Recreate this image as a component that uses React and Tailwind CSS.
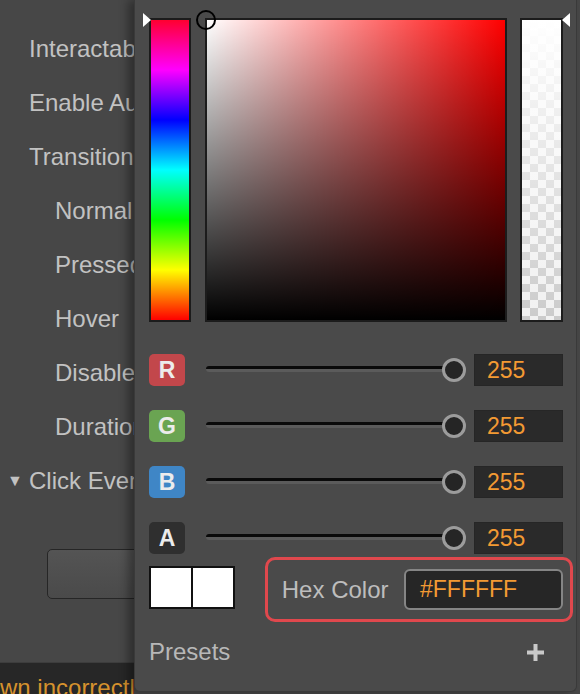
import React from 'react';

const labels = [
  { text: 'Interactable', indent: false },
  { text: 'Enable Auto Gray Effect', indent: false },
  { text: 'Transition', indent: false },
  { text: 'Normal', indent: true },
  { text: 'Pressed', indent: true },
  { text: 'Hover', indent: true },
  { text: 'Disabled', indent: true },
  { text: 'Duration', indent: true },
];

const channels = [
  { key: 'R', badge: 'bg-[#c2474b]', value: 255 },
  { key: 'G', badge: 'bg-[#6aa452]', value: 255 },
  { key: 'B', badge: 'bg-[#3f86c6]', value: 255 },
  { key: 'A', badge: 'bg-[#2f2f2f]', value: 255 },
];

function ChannelRow({ ch }) {
  return (
    <div className="flex items-center h-[32px]">
      <div className={`${ch.badge} w-[36px] h-[32px] rounded-[5px] flex items-center justify-center text-[23px] font-bold text-[#ececec]`}>
        {ch.key}
      </div>
      {/* slider */}
      <div className="relative ml-[21px] w-[260px] h-[32px] flex items-center">
        <div className="w-[248px] h-[6px] -translate-y-[1px] rounded-l-full border-t-[3px] border-[#0a0a0a] bg-[#5b5b5b]" />
        <div className="absolute right-0 top-[4px] w-[24px] h-[24px] rounded-full border-[3px] border-[#9c9c9c] bg-[#252525]" />
      </div>
      <div className="ml-[8px] w-[89px] h-[32px] bg-[#2a2a2a] border border-[#262626] flex items-center pl-[12px] text-[23px] text-[#f39a33]">
        {ch.value}
      </div>
    </div>
  );
}

function ColorPicker() {
  return (
    <div className="absolute left-[134px] top-0 w-[443px] h-[692px] bg-[#4a4a4a] border-l border-r border-b border-[#3a3a3a] rounded-b-[6px] shadow-[-6px_0_10px_rgba(0,0,0,0.35)] pl-[14px] pt-[18px] pr-[13px]">
      {/* pickers */}
      <div className="flex h-[304px]">
        {/* hue */}
        <div className="relative w-[42px] h-full border-2 border-[#1c1c1c]">
          <div className="w-full h-full bg-[linear-gradient(to_bottom,#ff0030,#ff00ff,#0000ff,#00ffff,#00ff00,#ffff00,#ff0000)]" />
          <svg className="absolute -left-[8px] -top-[7px]" width="8" height="14" viewBox="0 0 8 14">
            <polygon points="0,0 8,7 0,14" fill="#ffffff" />
          </svg>
        </div>
        {/* saturation / value */}
        <div className="relative ml-[14px] w-[302px] h-full border-2 border-[#1c1c1c] bg-[#ff0000]">
          <div className="w-full h-full bg-[linear-gradient(to_right,#ffffff,rgba(255,255,255,0))]">
            <div className="w-full h-full bg-[linear-gradient(to_bottom,rgba(0,0,0,0),#000000)]" />
          </div>
          <div className="absolute -left-[11px] -top-[10px] w-[20px] h-[20px] rounded-full border-[2.5px] border-black" />
        </div>
        {/* alpha */}
        <div className="relative ml-[13px] w-[43px] h-full border-2 border-[#1c1c1c]">
          <div className="w-full h-full bg-[repeating-conic-gradient(#cbcbcb_0%_25%,#f1f1f1_0%_50%)] bg-[length:16px_16px]">
            <div className="w-full h-full bg-[linear-gradient(to_bottom,#ffffff,rgba(255,255,255,0))]" />
          </div>
          <svg className="absolute -right-[9px] -top-[7px]" width="8" height="14" viewBox="0 0 8 14">
            <polygon points="8,0 0,7 8,14" fill="#ffffff" />
          </svg>
        </div>
      </div>

      {/* channel sliders */}
      <div className="mt-[32px] flex flex-col gap-[24px]">
        {channels.map(ch => <ChannelRow key={ch.key} ch={ch} />)}
      </div>

      {/* preview + hex */}
      <div className="mt-[3px] flex items-center">
        <div className="w-[86px] h-[43px] flex border-2 border-[#111] bg-[#111] gap-[2px] -mt-[4px]">
          <div className="flex-1 bg-white" />
          <div className="flex-1 bg-white" />
        </div>
        <div className="ml-[30px] -mr-[10px] w-[309px] h-[65px] rounded-[10px] border-[3px] border-[#e0484d] flex items-center pl-[14px] pr-[7px]">
          <span className="text-[24px] text-[#bdbdbd]">Hex Color</span>
          <div className="ml-auto w-[159px] h-[41px] rounded-[6px] border-2 border-[#858585] bg-[#262626] flex items-center pl-[14px] text-[23px] text-[#f39a33]">
            #FFFFFF
          </div>
        </div>
      </div>

      {/* presets */}
      <div className="mt-[18px] flex items-center justify-between pr-[19px]">
        <span className="text-[24px] leading-[24px] text-[#b8b8b8]">Presets</span>
        <svg width="17" height="17" viewBox="0 0 17 17">
          <rect x="6.5" y="0" width="4" height="17" fill="#c9c9c9" />
          <rect x="0" y="6.5" width="17" height="4" fill="#c9c9c9" />
        </svg>
      </div>
    </div>
  );
}

export default function App() {
  return (
    <div className="relative w-[580px] h-[694px] overflow-hidden bg-[#474747] font-['Liberation_Sans',Arial,sans-serif]">
      {/* inspector behind, clipped where the picker covers it */}
      <div className="flex flex-col h-full w-[134px] overflow-hidden">
        <div className="pt-[22px] flex flex-col">
          {labels.map(l => (
            <div key={l.text} className={`h-[54px] leading-[54px] text-[24px] text-[#c2c2c2] whitespace-nowrap ${l.indent ? 'pl-[55px]' : 'pl-[29px]'}`}>
              {l.text}
            </div>
          ))}
          <div className="h-[54px] flex items-center text-[24px] text-[#c2c2c2] whitespace-nowrap">
            <span className="w-[29px] shrink-0 pl-[7px] text-[16px]">▼</span>
            <span>Click Events</span>
          </div>
        </div>
        <div className="mt-[41px] ml-[47px] w-[200px] shrink-0 h-[50px] rounded-[5px] border-[1.5px] border-[#262626] bg-[linear-gradient(to_bottom,#545454,#4a4a4a)]" />
        <div className="mt-auto h-[32px] bg-[#272727] border-t border-[#3d3d3d] overflow-hidden pt-[13px] text-[24px] leading-[24px] text-[#d6922d] whitespace-nowrap">
          wn incorrectly
        </div>
      </div>
      <ColorPicker />
    </div>
  );
}
